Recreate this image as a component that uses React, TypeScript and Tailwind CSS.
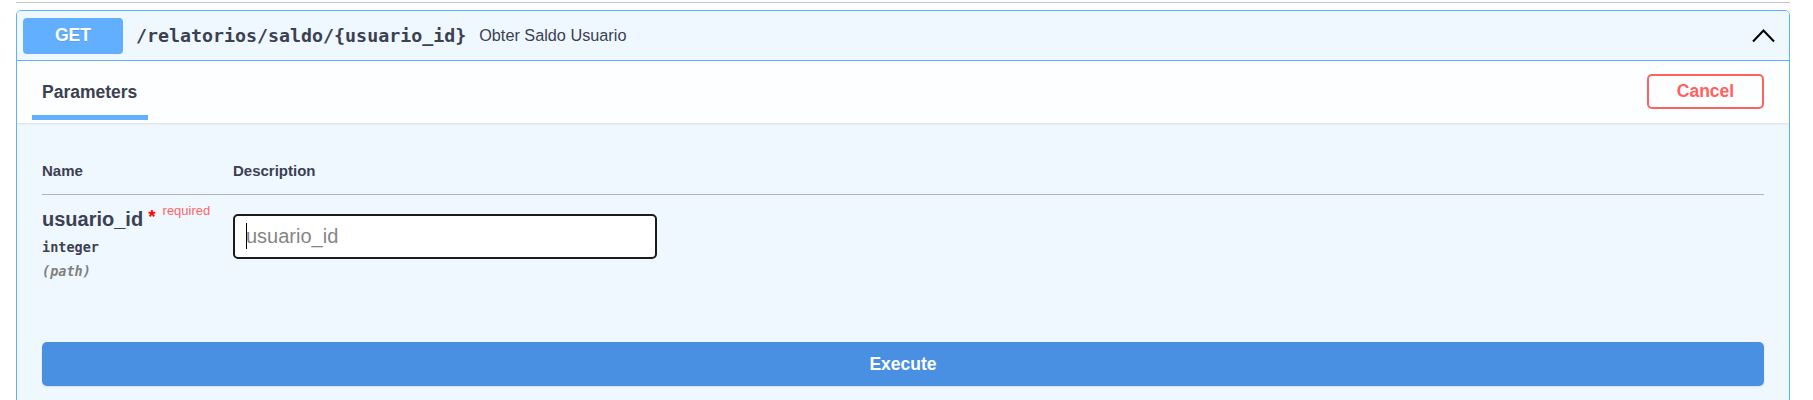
import { useState } from "react";

const sans = { fontFamily: '"Liberation Sans", Arial, sans-serif' };

function Chevron() {
  return (
    <svg width="23" height="14" viewBox="0 0 23 14" className="shrink-0">
      <path d="M1 12.5 L11.5 1.5 L22 12.5" fill="none" stroke="#000" strokeWidth="2" />
    </svg>
  );
}

function Summary() {
  return (
    <div className="flex h-[50px] items-center border-b border-[#61affe] bg-[#eff7ff] pl-[6px] pr-[14px]">
      <div className="flex h-9 w-[100px] items-center justify-center rounded-[4px] bg-[#61affe] text-[17.5px] font-bold text-white [text-shadow:0_1px_0_rgba(0,0,0,0.1)]">
        GET
      </div>
      <span className="px-[13px] font-['DejaVu_Sans_Mono',monospace] text-[18.3px] font-bold text-[#3b4151]">
        /relatorios/saldo/&#123;usuario_id&#125;
      </span>
      <span className="text-[16.25px] text-[#3b4151]">Obter Saldo Usuario</span>
      <div className="flex-1" />
      <Chevron />
    </div>
  );
}

function TabHeader() {
  return (
    <div className="flex h-[62px] items-center justify-between bg-[#fcfeff] pl-[25px] pr-[25px] shadow-[0_1px_2px_rgba(0,0,0,0.1)]">
      <div className="relative">
        <h4 className="text-[17.5px] font-bold text-[#3b4151]">Parameters</h4>
        <span className="absolute left-[-10px] right-[-11px] top-[36px] h-[5px] bg-[#61affe]" />
      </div>
      <button className="mt-[-1px] h-[35px] w-[117px] rounded-[5px] border-[2.5px] border-[#ff6060] text-[17.5px] font-bold text-[#ff6060]">
        Cancel
      </button>
    </div>
  );
}

function ParamRow() {
  const [value, setValue] = useState("");
  return (
    <div className="flex pt-[10px]">
      <div className="w-[191px] shrink-0">
        <div className="flex items-start text-[#3b4151]">
          <span className="text-[20px] font-bold leading-[28px]">usuario_id</span>
          <span className="ml-[5px] mt-[2px] text-[19px] font-bold leading-[20px] text-[#ff0000]">*</span>
          <span className="ml-[7px] mt-[-4px] text-[13px] leading-[20px] text-[#ff6666]">required</span>
        </div>
        <div className="mt-[5px] font-['DejaVu_Sans_Mono',monospace] text-[13.5px] font-bold leading-[18px] text-[#3b4151]">
          integer
        </div>
        <div className="mt-[6px] font-['DejaVu_Sans_Mono',monospace] text-[13.5px] font-bold italic leading-[18px] text-[#808080]">
          (path)
        </div>
      </div>
      <div className="relative mt-[9px] h-[45px] w-[424px]">
        <input
          value={value}
          onChange={(e) => setValue(e.target.value)}
          placeholder="usuario_id"
          className="h-full w-full rounded-[5px] border-2 border-[#1b1b1b] bg-white pl-[11px] text-[20px] text-[#3b4151] outline-none placeholder:text-[#858585]"
          style={sans}
        />
        {value === "" && <span className="absolute left-[13px] top-[9px] h-[26px] w-px bg-black" />}
      </div>
    </div>
  );
}

export default function App() {
  return (
    <div className="min-h-[400px] bg-white px-4 pt-[2px]" style={sans}>
      <div className="mr-[7px] h-px bg-[#c4c6cb]" />
      <div className="mr-[7px] mt-[7px] overflow-hidden rounded-[5px] border border-[#61affe] bg-[#eff7ff]">
        <Summary />
        <TabHeader />
        <div className="px-[25px] pt-[39px]">
          <div className="flex border-b border-[#b1b3b9] pb-[14px] text-[15px] font-bold leading-[18px] text-[#3b4151]">
            <div className="w-[191px]">Name</div>
            <div>Description</div>
          </div>
          <ParamRow />
          <div className="pb-[30px] pt-[62px]">
            <button className="h-[44px] w-full rounded-[5px] bg-[#4990e2] text-[17.5px] font-bold text-white shadow-[0_1px_2px_rgba(0,0,0,0.1)]">
              Execute
            </button>
          </div>
        </div>
      </div>
    </div>
  );
}
